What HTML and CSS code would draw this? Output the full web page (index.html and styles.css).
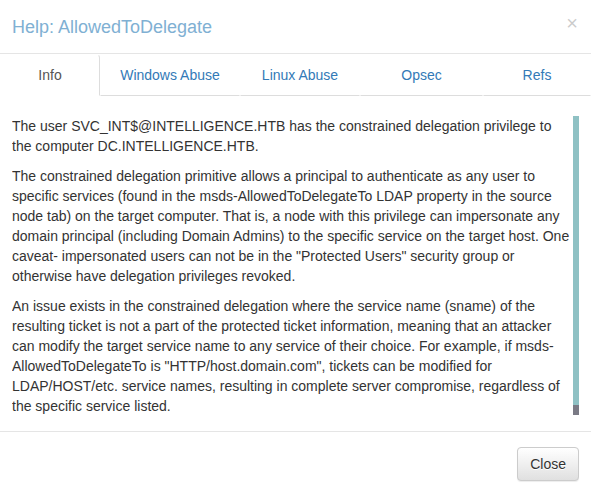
FILE: index.html
```html
<!DOCTYPE html>
<html lang="en">
<head>
    <meta charset="UTF-8">
    <meta name="viewport" content="width=device-width, initial-scale=1.0">
    <title>Help: AllowedToDelegate</title>
    <link rel="stylesheet" href="styles.css">
</head>
<body>
    <div class="modal">
        <div class="modal-header">
            <h4 class="modal-title">Help: AllowedToDelegate</h4>
            <button class="close">&times;</button>
        </div>
        <ul class="tabs">
            <li class="tab active"><a>Info</a></li>
            <li class="tab"><a>Windows Abuse</a></li>
            <li class="tab"><a>Linux Abuse</a></li>
            <li class="tab"><a>Opsec</a></li>
            <li class="tab"><a>Refs</a></li>
        </ul>
        <div class="modal-body">
            <div class="scroller">
                <p>The user SVC_INT$@INTELLIGENCE.HTB has the constrained delegation privilege to the computer DC.INTELLIGENCE.HTB.</p>
                <p>The constrained delegation primitive allows a principal to authenticate as any user to specific services (found in the msds-AllowedToDelegateTo LDAP property in the source node tab) on the target computer. That is, a node with this privilege can impersonate any domain principal (including Domain Admins) to the specific service on the target host. One caveat- impersonated users can not be in the "Protected Users" security group or otherwise have delegation privileges revoked.</p>
                <p>An issue exists in the constrained delegation where the service name (sname) of the resulting ticket is not a part of the protected ticket information, meaning that an attacker can modify the target service name to any service of their choice. For example, if msds-AllowedToDelegateTo is "HTTP/host.domain.com", tickets can be modified for LDAP/HOST/etc. service names, resulting in complete server compromise, regardless of the specific service listed.</p>
            </div>
            <div class="scrollbar"><div class="thumb"></div></div>
        </div>
        <div class="modal-footer">
            <button class="btn">Close</button>
        </div>
    </div>
</body>
</html>
```

FILE: styles.css
```css
body {
    margin: 0;
    background-color: #fff;
    font-family: "Liberation Sans", Arial, sans-serif;
    font-size: 14px;
    line-height: 20px;
    color: #333;
}
.modal {
    width: 591px;
}
.modal-header {
    display: flex;
    justify-content: space-between;
    align-items: flex-start;
    padding: 15px 12px 14px 12px;
    border-bottom: 1px solid #e5e5e5;
}
.modal-title {
    margin: 0;
    font-size: 18px;
    font-weight: normal;
    line-height: 24px;
    color: #80b0d3;
}
.close {
    padding: 0;
    border: 0;
    background: none;
    font-family: "Liberation Sans", Arial, sans-serif;
    font-size: 20px;
    line-height: 16px;
    color: #000;
    opacity: 0.2;
    margin-right: 1px;
}
.tabs {
    display: grid;
    grid-template-columns: 100px 140px 120px 123px 1fr;
    margin: 0;
    padding: 0;
    list-style: none;
}
.tab a {
    display: block;
    padding: 10px 0;
    text-align: center;
    color: #337ab7;
    border: 1px solid transparent;
    border-bottom-color: #ddd;
    border-radius: 4px 4px 0 0;
}
.tab.active a {
    color: #555;
    border-color: #ddd;
    border-top-color: transparent;
    border-bottom-color: transparent;
    border-left-color: transparent;
    border-top-left-radius: 0;
}
.modal-body {
    display: flex;
    padding: 20px 12px 16px 12px;
}
.scroller {
    width: 561px;
    height: 299px;
    overflow: hidden;
}
.scroller p {
    margin: 0 0 10px 0;
}
.scrollbar {
    width: 6px;
    height: 299px;
    background-color: #7a7a85;
}
.thumb {
    height: 289px;
    background-color: #8fc1c4;
}
.modal-footer {
    display: flex;
    justify-content: flex-end;
    padding: 15px 12px;
    border-top: 1px solid #e5e5e5;
}
.btn {
    padding: 6px 12px;
    font-family: "Liberation Sans", Arial, sans-serif;
    font-size: 14px;
    line-height: 20px;
    color: #333;
    background-color: #e0e0e0;
    background-image: linear-gradient(to bottom, #fff 0, #e0e0e0 100%);
    border: 1px solid #ccc;
    border-radius: 4px;
    text-shadow: 0 1px 0 #fff;
    box-shadow: inset 0 1px 0 rgba(255, 255, 255, 0.15), 0 1px 1px rgba(0, 0, 0, 0.075);
}
```
